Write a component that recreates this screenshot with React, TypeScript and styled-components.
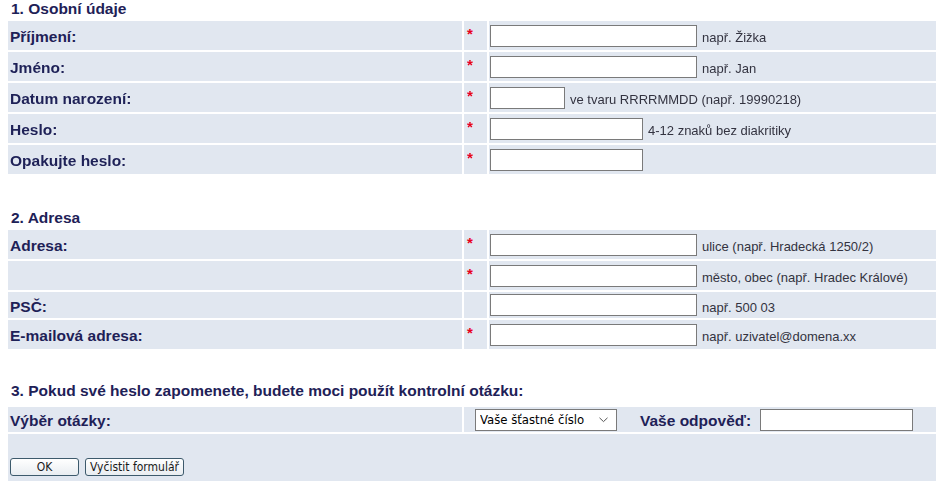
import styled, { createGlobalStyle } from "styled-components";

const GlobalStyle = createGlobalStyle`
  body {
    margin: 0;
    background: #ffffff;
    font-family: "Liberation Sans", Arial, sans-serif;
  }
`;

type Field = {
  label: string;
  required: boolean;
  width: number;
  hint?: string;
  type?: string;
  autoFocus?: boolean;
};

const personal: Field[] = [
  { label: "Příjmení:", required: true, width: 207, hint: "např. Žižka", autoFocus: true },
  { label: "Jméno:", required: true, width: 207, hint: "např. Jan" },
  { label: "Datum narození:", required: true, width: 75, hint: "ve tvaru RRRRMMDD (např. 19990218)" },
  { label: "Heslo:", required: true, width: 153, hint: "4-12 znaků bez diakritiky", type: "password" },
  { label: "Opakujte heslo:", required: true, width: 153, type: "password" },
];

const address: Field[] = [
  { label: "Adresa:", required: true, width: 207, hint: "ulice (např. Hradecká 1250/2)" },
  { label: "", required: true, width: 207, hint: "město, obec (např. Hradec Králové)" },
  { label: "PSČ:", required: false, width: 207, hint: "např. 500 03" },
  { label: "E-mailová adresa:", required: true, width: 207, hint: "např. uzivatel@domena.xx" },
];

const FieldRows = ({ fields }: { fields: Field[] }) => (
  <Rows>
    {fields.map((f, i) => (
      <FieldRow key={i}>
        <LabelCell>{f.label}</LabelCell>
        <StarCell>{f.required && <Star>*</Star>}</StarCell>
        <InputCell>
          <TextInput $w={f.width} type={f.type || "text"} autoFocus={f.autoFocus} />
          {f.hint && <Hint>{f.hint}</Hint>}
        </InputCell>
      </FieldRow>
    ))}
  </Rows>
);

export default function App() {
  return (
    <Page>
      <GlobalStyle />
      <Section $after={35}>
        <SectionTitle>1. Osobní údaje</SectionTitle>
        <FieldRows fields={personal} />
      </Section>
      <Section $after={33}>
        <SectionTitle>2. Adresa</SectionTitle>
        <FieldRows fields={address} />
      </Section>
      <Section $after={0}>
        <SectionTitle $gap={8}>3. Pokud své heslo zapomenete, budete moci použít kontrolní otázku:</SectionTitle>
        <Rows>
          <QuestionRow>
            <LabelCell>Výběr otázky:</LabelCell>
            <QuestionCell>
              <SelectWrap>
                <Select defaultValue="cislo">
                  <option value="cislo">Vaše šťastné číslo</option>
                  <option value="zvire">Jméno domácího zvířete</option>
                  <option value="mesto">Rodné město</option>
                </Select>
                <Chevron width="9" height="6" viewBox="0 0 9 6">
                  <path d="M0.5 0.8 L4.5 4.6 L8.5 0.8" fill="none" stroke="#555" strokeWidth="1" />
                </Chevron>
              </SelectWrap>
              <AnswerLabel>Vaše odpověď:</AnswerLabel>
              <TextInput $w={153} type="text" />
            </QuestionCell>
          </QuestionRow>
          <ButtonRow>
            <Button type="submit" $w={69}>OK</Button>
            <Button type="reset" $w={99}>Vyčistit formulář</Button>
          </ButtonRow>
        </Rows>
      </Section>
    </Page>
  );
}

const Page = styled.form`
  width: 928px;
  padding-left: 8px;
`;

const Section = styled.section<{ $after: number }>`
  margin-bottom: ${({ $after }) => $after}px;
`;

const SectionTitle = styled.h2<{ $gap?: number }>`
  margin: 0 0 ${({ $gap }) => $gap ?? 4}px 3px;
  color: #1e2157;
  font-size: 15.5px;
  line-height: 17px;
  font-weight: bold;
`;

const Rows = styled.div`
  display: flex;
  flex-direction: column;
  gap: 2px;
`;

const FieldRow = styled.div`
  display: grid;
  grid-template-columns: 454px 23px 1fr;
  column-gap: 2px;
`;

const Cell = styled.div`
  background: #e1e7f0;
`;

const LabelCell = styled(Cell)`
  display: flex;
  align-items: center;
  padding: 3px 2px 0;
  color: #1e2157;
  font-size: 15.5px;
  font-weight: bold;
`;

const StarCell = styled(Cell)`
  padding: 4px 3px 8px;
`;

const Star = styled.span`
  display: block;
  color: #e8001c;
  font-size: 15px;
  font-weight: bold;
  line-height: 17px;
`;

const InputCell = styled(Cell)`
  display: flex;
  align-items: center;
  gap: 5px;
  padding: 2px 1px;
`;

const TextInput = styled.input<{ $w: number }>`
  box-sizing: border-box;
  width: ${({ $w }) => $w}px;
  height: 22px;
  margin: 0;
  padding: 1px 3px;
  border: 1px solid #7a7a7a;
  border-radius: 0;
  background: #ffffff;
  font-family: "Liberation Sans", Arial, sans-serif;
  font-size: 13px;
  outline: none;
  caret-color: #000000;
`;

const Hint = styled.span`
  padding-top: 4px;
  color: #333340;
  font-size: 13px;
`;

const QuestionRow = styled.div`
  display: grid;
  grid-template-columns: 454px 1fr;
  column-gap: 2px;
`;

const QuestionCell = styled(Cell)`
  display: flex;
  align-items: center;
  padding: 2px 0 2px 11px;
  height: 25px;
  box-sizing: border-box;
`;

const SelectWrap = styled.div`
  position: relative;
  margin-right: 23px;
  display: flex;
`;

const Select = styled.select`
  appearance: none;
  box-sizing: border-box;
  width: 142px;
  height: 22px;
  margin: 0;
  padding: 0 20px 0 4px;
  border: 1px solid #7a7a7a;
  border-radius: 0;
  background: #ffffff;
  color: #000000;
  font-family: "DejaVu Sans Condensed", "DejaVu Sans", sans-serif;
  font-size: 13px;
`;

const Chevron = styled.svg`
  position: absolute;
  right: 9px;
  top: 8px;
  pointer-events: none;
`;

const AnswerLabel = styled.span`
  margin-right: 9px;
  padding-top: 2px;
  color: #1e2157;
  font-size: 15.5px;
  font-weight: bold;
`;

const ButtonRow = styled(Cell)`
  display: flex;
  align-items: flex-end;
  gap: 6px;
  height: 47px;
  box-sizing: border-box;
  padding: 0 0 5px 2px;
`;

const Button = styled.button<{ $w: number }>`
  box-sizing: border-box;
  width: ${({ $w }) => $w}px;
  height: 18px;
  margin: 0;
  padding: 0 1px;
  border: 1px solid #3d5a6c;
  border-radius: 3px;
  background: linear-gradient(#ffffff, #e9edf1);
  color: #1a1a1a;
  font-family: "DejaVu Sans Condensed", "DejaVu Sans", sans-serif;
  font-size: 12px;
  line-height: 14px;
  white-space: nowrap;
`;
